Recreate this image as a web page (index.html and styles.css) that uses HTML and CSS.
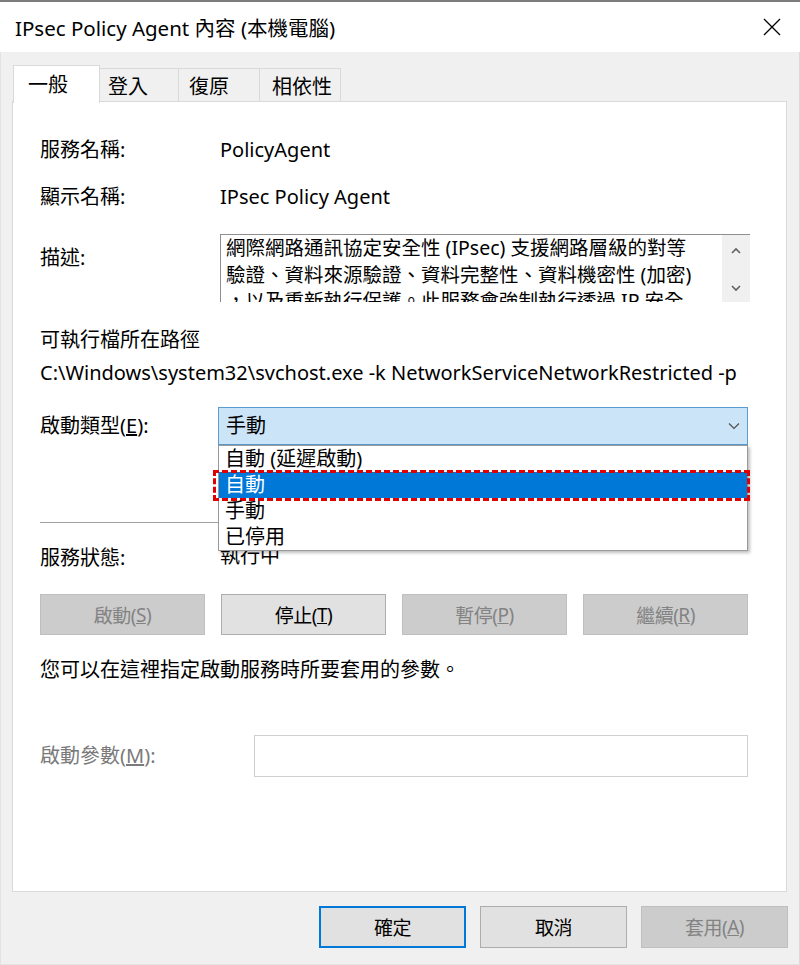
FILE: index.html
```html
<!DOCTYPE html>
<html lang="zh-Hant">
<head>
<meta charset="utf-8">
<title>IPsec Policy Agent 內容 (本機電腦)</title>
<link rel="stylesheet" href="styles.css">
</head>
<body>
<div class="window">
  <div class="titlebar">
    <span class="title">IPsec Policy Agent 內容 (本機電腦)</span>
    <svg class="close" width="18" height="18" viewBox="0 0 18 18"><path d="M1 1 L17 17 M17 1 L1 17" stroke="#000" stroke-width="1.3" fill="none"/></svg>
  </div>
  <div class="body">
    <div class="tabs">
      <div class="tab active">一般</div>
      <div class="tab t2">登入</div>
      <div class="tab t3">復原</div>
      <div class="tab t4">相依性</div>
    </div>
    <div class="panel">
      <div class="row r1"><span class="label">服務名稱:</span><span class="value">PolicyAgent</span></div>
      <div class="row r2"><span class="label">顯示名稱:</span><span class="value">IPsec Policy Agent</span></div>
      <div class="row desc-row">
        <span class="label desc-label">描述:</span>
        <div class="desc-box">
          <div class="desc-text">網際網路通訊協定安全性 (IPsec) 支援網路層級的對等<br>驗證、資料來源驗證、資料完整性、資料機密性 (加密)<br>，以及重新執行保護。此服務會強制執行透過 IP 安全<br>性原則管理單元或命令列工具 "netsh ipsec" 建立的 IPsec 原則。</div>
          <div class="scrollbar">
            <svg width="12" height="8" viewBox="0 0 12 8"><path d="M2 6 L6 2 L10 6" stroke="#606060" stroke-width="1.6" fill="none"/></svg>
            <svg width="12" height="8" viewBox="0 0 12 8"><path d="M2 2 L6 6 L10 2" stroke="#606060" stroke-width="1.6" fill="none"/></svg>
          </div>
        </div>
      </div>
      <div class="plain path-label">可執行檔所在路徑</div>
      <div class="plain path">C:\Windows\system32\svchost.exe -k NetworkServiceNetworkRestricted -p</div>
      <div class="row startup-row">
        <span class="label">啟動類型(<u>E</u>):</span>
        <div class="combo-wrap">
          <div class="combo">
            <span>手動</span>
            <svg width="12" height="8" viewBox="0 0 12 8"><path d="M1 1.5 L6 6.5 L11 1.5" stroke="#505050" stroke-width="1.2" fill="none"/></svg>
          </div>
          <ul class="dropdown">
            <li>自動 (延遲啟動)</li>
            <li class="selected">自動</li>
            <li>手動</li>
            <li>已停用</li>
          </ul>
        </div>
      </div>
      <div class="separator"></div>
      <div class="row status-row"><span class="label">服務狀態:</span><span class="value">執行中</span></div>
      <div class="svc-buttons">
        <button class="btn disabled">啟動(<u>S</u>)</button>
        <button class="btn">停止(<u>T</u>)</button>
        <button class="btn disabled">暫停(<u>P</u>)</button>
        <button class="btn disabled">繼續(<u>R</u>)</button>
      </div>
      <div class="plain hint">您可以在這裡指定啟動服務時所要套用的參數。</div>
      <div class="row param-row">
        <span class="label param-label">啟動參數(<u>M</u>):</span>
        <div class="param-input"></div>
      </div>
    </div>
    <div class="footer">
      <button class="btn dlg default">確定</button>
      <button class="btn dlg">取消</button>
      <button class="btn dlg disabled">套用(<u>A</u>)</button>
    </div>
  </div>
</div>
</body>
</html>
```
FILE: styles.css
```css
* { box-sizing: border-box; }
html, body { margin: 0; padding: 0; }
body {
  width: 800px;
  height: 965px;
  overflow: hidden;
  font-family: "Noto Sans", "Noto Sans CJK TC", sans-serif;
  color: #000;
  font-size: 20px;
}
.window {
  width: 800px;
  height: 965px;
  border-top: 2px solid #7c7c7c;
  background: #f0f0f0;
  display: flex;
  flex-direction: column;
}
.titlebar {
  height: 50px;
  background: #fff;
  display: flex;
  align-items: center;
  justify-content: space-between;
  padding: 0 19px 0 15px;
  flex: none;
}
.title { font-size: 20.5px; }
.close { display: block; }
.body {
  flex: 1;
  background: #f0f0f0;
  border-left: 1px solid #e3e3e3;
  border-right: 1px solid #dadada;
  border-bottom: 1px solid #e3e3e3;
  padding: 15px 0 0 11px;
  display: flex;
  flex-direction: column;
}
.tabs {
  display: flex;
  align-items: flex-end;
  height: 36px;
  padding-left: 1px;
  margin-bottom: -2px;
  position: relative;
  z-index: 2;
}
.tab {
  height: 34px;
  border: 1px solid #d9d9d9;
  border-left: none;
  background: #f0f0f0;
  display: flex;
  align-items: center;
  font-size: 20px;
  padding-top: 1px;
  margin-bottom: 1px;
}
.tab.active {
  width: 87px;
  height: 38px;
  background: #fff;
  border-left: 1px solid #d9d9d9;
  border-bottom: none;
  padding-left: 14px;
  padding-bottom: 4px;
  margin-bottom: 0;
}
.tab.t2 { width: 79px; padding-left: 8px; }
.tab.t3 { width: 81px; padding-left: 10px; }
.tab.t4 { width: 81px; padding-left: 12px; }
.panel {
  width: 775px;
  height: 791px;
  background: #fff;
  border: 1px solid #d9d9d9;
  padding: 35px 0 0 27px;
  display: flex;
  flex-direction: column;
  position: relative;
  z-index: 1;
}
.row {
  display: flex;
  align-items: center;
  line-height: 26px;
}
.label { width: 180px; flex: none; }
.value { font-size: 20px; }
.r2 { margin-top: 21px; }
.desc-row { margin-top: 24px; align-items: flex-start; }
.desc-label { padding-top: 11px; }
.desc-box {
  width: 530px;
  height: 68px;
  border-top: 1px solid #8e8e8e;
  border-left: 1px solid #8e8e8e;
  display: flex;
  overflow: hidden;
}
.desc-text {
  flex: 1;
  padding: 0 0 0 5px;
  line-height: 26.5px;
  font-size: 19.5px;
  white-space: nowrap;
  overflow: hidden;
}
.scrollbar {
  width: 28px;
  flex: none;
  background: #f0f0f0;
  display: flex;
  flex-direction: column;
  align-items: center;
  justify-content: space-between;
  padding: 12px 0 10px;
}
.scrollbar svg { display: block; }
.plain { line-height: 26px; }
.path-label { margin-top: 25px; }
.path { margin-top: 7px; font-size: 20px; white-space: nowrap; }
.startup-row { margin-top: 21px; }
.startup-row .label { width: 178px; }
.combo-wrap { position: relative; width: 530px; }
.combo {
  height: 38px;
  background: #cce4f7;
  border: 1px solid #5a9bd0;
  display: flex;
  align-items: center;
  justify-content: space-between;
  padding: 0 7px 0 7px;
}
.combo svg { display: block; }
.dropdown {
  position: absolute;
  top: 100%;
  left: 0;
  width: 530px;
  margin: 0;
  padding: 0;
  list-style: none;
  background: #fff;
  border: 1px solid #9a9a9a;
  box-shadow: 2px 2px 3px rgba(0,0,0,0.25);
  z-index: 5;
}
.dropdown li {
  height: 26px;
  line-height: 26px;
  padding-left: 6px;
  position: relative;
}
.dropdown li.selected {
  background: #0078d7;
  color: #fff;
}
.dropdown li.selected::after {
  content: "";
  position: absolute;
  left: -6px;
  right: -3px;
  top: -2px;
  bottom: -3px;
  border: 3px dashed #e00000;
}
.separator {
  margin-top: 77px;
  width: 708px;
  height: 1px;
  background: #a0a0a0;
}
.status-row { margin-top: 22px; }
.status-row .value { position: relative; top: -2px; }
.svc-buttons {
  margin-top: 23px;
  width: 708px;
  display: flex;
  justify-content: space-between;
}
.btn {
  font-family: inherit;
  font-size: 19px;
  color: #000;
  background: #e1e1e1;
  border: 1px solid #adadad;
  height: 41px;
  width: 165px;
  padding: 0;
  display: flex;
  align-items: center;
  justify-content: center;
  letter-spacing: -0.5px;
}
.btn.disabled {
  background: #cccccc;
  border-color: #bfbfbf;
  color: #838383;
}
.hint { margin-top: 22px; }
.param-row { margin-top: 52px; }
.param-label { width: 214px; color: #7a7a7a; }
.param-input {
  width: 494px;
  height: 42px;
  border: 1px solid #d0d0d0;
  background: #fff;
}
.footer {
  margin-top: 14px;
  display: flex;
  justify-content: flex-end;
  gap: 14px;
  padding-right: 11px;
}
.btn.dlg { width: 147px; height: 42px; }
.btn.default { border: 2px solid #0078d7; }
```
